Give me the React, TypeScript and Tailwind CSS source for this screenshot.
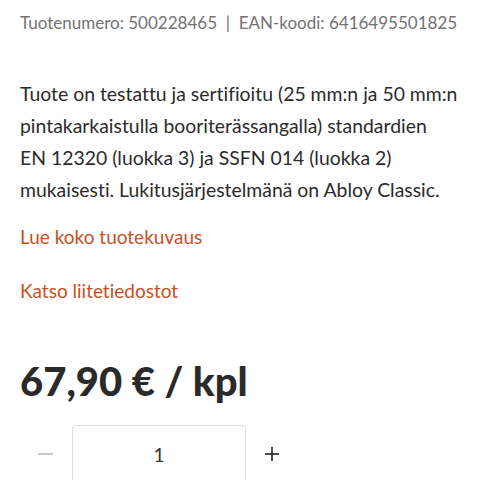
import React from "react";

export default function App() {
  return (
    <div className="w-[480px] h-[480px] overflow-hidden bg-white px-5 font-['Lato',sans-serif] [font-variant-ligatures:none]">
      <div className="pt-[11px] text-[17px] leading-[24px] text-[#737373] whitespace-nowrap">
        Tuotenumero: 500228465&nbsp; | &nbsp;EAN-koodi: 6416495501825
      </div>
      <p className="mt-[43px] text-[19.4px] leading-[32px] text-[#2b2b2b] whitespace-nowrap">
        Tuote on testattu ja sertifioitu (25 mm:n ja 50 mm:n
        <br />
        pintakarkaistulla booriterässangalla) standardien
        <br />
        EN 12320 (luokka 3) ja SSFN 014 (luokka 2)
        <br />
        mukaisesti. Lukitusjärjestelmänä on Abloy Classic.
      </p>
      <div className="mt-[15px] text-[19px] leading-[32px] text-[#c8501e]">Lue koko tuotekuvaus</div>
      <div className="mt-[22px] text-[19px] leading-[32px] text-[#c8501e]">Katso liitetiedostot</div>
      <div className="mt-[50px] text-[40px] leading-[48px] font-black text-[#2a2a2a]">67,90 € / kpl</div>
      <div className="mt-[20px] flex items-start">
        <div className="w-[52px] h-[58px] flex items-center pl-[18px]">
          <svg width="16" height="16" viewBox="0 0 16 16">
            <line x1="0" y1="8" x2="15" y2="8" stroke="#bdbdbd" strokeWidth="1.6" />
          </svg>
        </div>
        <div className="w-[174px] h-[70px] border border-[#ddd] rounded-[4px] flex justify-center pt-[15px] text-[19px] text-[#333]">1</div>
        <div className="w-[52px] h-[58px] flex items-center justify-center">
          <svg width="16" height="16" viewBox="0 0 16 16">
            <line x1="1" y1="8" x2="15" y2="8" stroke="#222" strokeWidth="1.6" />
            <line x1="8" y1="1" x2="8" y2="15" stroke="#222" strokeWidth="1.6" />
          </svg>
        </div>
      </div>
    </div>
  );
}
